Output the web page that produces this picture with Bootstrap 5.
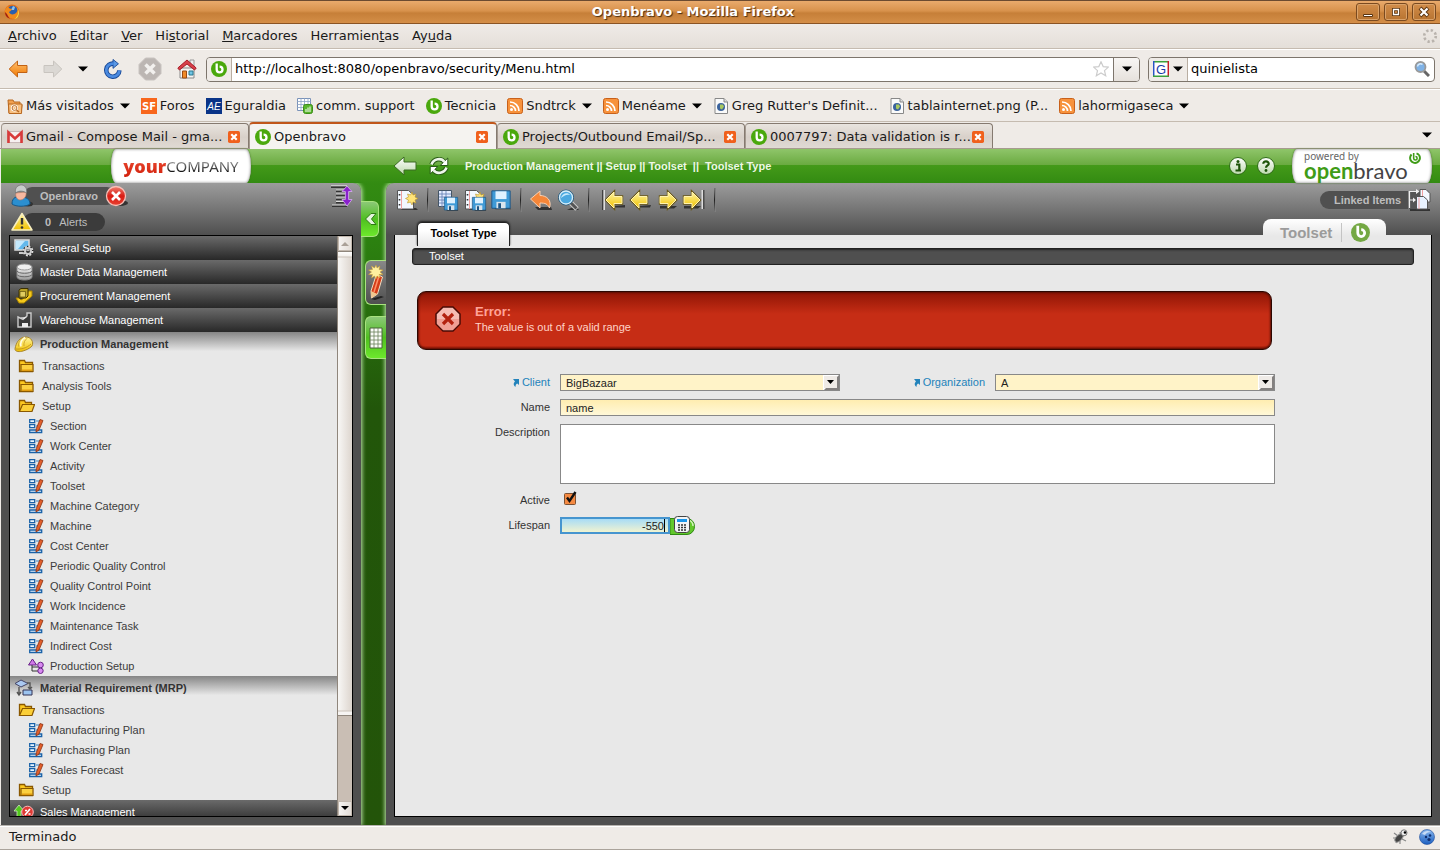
<!DOCTYPE html>
<html lang="es">
<head>
<meta charset="utf-8">
<meta name="viewport" content="width=device-width, initial-scale=1">
<title>Openbravo - Mozilla Firefox</title>
<link rel="stylesheet" href="https://cdn.jsdelivr.net/npm/bootstrap@5.3.0/dist/css/bootstrap.min.css">
<style>
  :root { --chrome: #efebe7; --line: #c5bbb0; }
  body { font: 13px/16px "DejaVu Sans", sans-serif; color: #1a1a1a; background: var(--chrome); overflow: hidden; }
  button { border: 0; background: none; padding: 0; color: inherit; font: inherit; white-space: nowrap; }
  a { color: inherit; text-decoration: none; }
  svg { display: block; flex: none; }
  .sprite { width: 0; height: 0; }
  .i10 { width: 10px; height: 6px; }
  .i12 { width: 12px; height: 12px; }
  .i16 { width: 16px; height: 16px; }
  .i20 { width: 20px; height: 20px; }
  .i24 { width: 24px; height: 24px; }

  /* window chrome */
  .title-bar { height: 24px; color: #fff; font-weight: bold; text-shadow: 1px 1px 1px #4a2c10; border-top: 1px solid #6b4a30; border-bottom: 1px solid #8a5424; background: linear-gradient(#e9aa6c, #d8924c 45%, #c67f38 55%, #d48e48); }
  .title-bar h1 { font-size: 13px; line-height: 16px; padding-right: 14px; }
  .win-btn { width: 24px; height: 18px; border: 1px solid #7a4a20; border-radius: 3px; box-shadow: inset 0 0 0 1px #dba36a; background: linear-gradient(#d28d4a, #b87431); }
  .menu-bar { height: 25px; gap: 13px; padding: 0 2px 0 8px; background: linear-gradient(#efebe7, #e4dfd9); border-bottom: 1px solid var(--line); }
  .nav-bar { height: 40px; border-top: 1px solid #fff; border-bottom: 1px solid var(--line); padding: 0 5px 0 8px; }
  .nav-keys { gap: 15px; padding-right: 9px; }
  .mark-bar { height: 33px; border-top: 1px solid #fff; border-bottom: 1px solid var(--line); gap: 11px; padding: 0 7px; }
  .mark-bar a, .mark-bar button { display: flex; align-items: center; gap: 3px; }
  .mark-bar .i10 { margin-left: 3px; }
  .url-box, .search-box { height: 25px; border: 1px solid #7d756c; border-radius: 4px; background: #fff; overflow: hidden; }
  .url-box input, .search-box input { border: 0; outline: 0; padding: 0 3px; min-width: 0; background: none; }
  .site-id { background: var(--chrome); border-right: 1px solid #b9aea2; }
  .url-drop { width: 26px; border-left: 1px solid #7d756c; background: linear-gradient(#f8f6f4, #e6e1dc); }
  .search-box { width: 287px; }
  .tab-bar { height: 27px; border-bottom: 1px solid #a79b90; padding-left: 1px; }
  .win-tab { flex: 0 1 248px; min-width: 0; height: 25px; gap: 3px; padding: 1px 8px 0 5px; border: 1px solid #857a70; border-bottom: 0; border-left-color: #a49a90; border-radius: 4px 4px 0 0; background: linear-gradient(#e9e4df, #d8d0c9 55%, #e0dad4); }
  .win-tab span { min-width: 0; flex: 1 1 0; text-align: left; }
  .win-tab.on { height: 27px; margin-bottom: -1px; border-top: 2px solid #c0561a; background: #f5f3f0; }
  .status-bar { height: 25px; border-top: 1px solid #b7b3ae; border-bottom: 1px solid #aaa39b; box-shadow: inset 0 1px #fff; padding: 0 5px 1px 9px; }

  /* application */
  .app { font: 11px/14px "Liberation Sans", Arial, sans-serif; border-left: 1px solid var(--chrome); background: linear-gradient(#8fc56a 0, #6aaa40 16px, #449a19 16px, #338b12 34px, #2c8110 90px, #22560a 260px, #235409); min-height: 0; }
  .app-head { height: 34px; color: #eef7e6; }
  .head-left { width: 360px; }
  .brand-tab { background: #fff; width: 140px; height: 34px; border-radius: 10px / 34px; box-shadow: inset 0 0 3px #777, 0 0 2px #3d6a22; }
  .brand-name { font: 18px/24px "Noto Sans", sans-serif; }
  .red-text { font-weight: 800; font-family: "Open Sans", sans-serif; background: linear-gradient(#f0563c, #d01c08); -webkit-background-clip: text; background-clip: text; color: transparent; }
  .gray-text { font-size: 15px; background: linear-gradient(#aaa 25%, #111 75%); -webkit-background-clip: text; background-clip: text; color: transparent; }
  .powered { font: 10px/11px "Noto Sans", sans-serif; color: #666; padding: 2px 12px 0; }
  .powered strong { font: 22px/17px Lato, sans-serif; color: #444; display: block; }
  .powered em { color: #3f9c17; font-style: normal; font-weight: bold; }
  .ob-small { right: 11px; top: 3px; }
  .panel { background: linear-gradient(#9c9c9c, #4f4f4f 52px, #4f4f4f); box-shadow: 0 0 4px 1px #c6e9b5; }
  .panel-left { width: 360px; border-radius: 0 8px 0 0; padding: 0 8px 8px; }
  .panel-main { border-radius: 8px 0 0 0; padding: 0 8px 8px; }
  .rail { width: 25px; padding-top: 18px; }
  .rail button { width: 21px; height: 43px; border: 1px solid #a9e37f; border-right: 0; border-radius: 6px 0 0 6px; background: linear-gradient(#8cc878, #4fbf20 50%, #6de82c); z-index: 1; }
  .rail .fold { width: 18px; height: 36px; border-right: 1px solid #a9e37f; border-left: 0; border-radius: 0 6px 6px 0; margin-bottom: 23px; }
  .rail .edit { height: 45px; margin-bottom: 11px; background: linear-gradient(#888, #4f4f4f); }
  .pill { height: 18px; border-radius: 9px; background: #505050; color: #bdbdbd; }
  .user-pill { padding: 0 18px 0 17px; margin-left: -10px; margin-right: -12px; }
  .alert-pill { padding: 0 18px 0 22px; margin-left: -10px; background: #3b3b3b; }
  .user-row { height: 26px; }
  .user-row > svg { position: relative; z-index: 1; }

  .menu-box { border: 1px solid #000; background: #e8e8e8; overflow: hidden; min-height: 0; }
  .menu-tree { min-height: 0; overflow: hidden; }
  .menu-tree ul { list-style: none; margin: 0; padding: 0; height: 0; }
  .menu-tree a { display: flex; align-items: center; color: #3c3c3c; height: 20px; }
  .menu-tree .top a { height: 24px; padding-left: 4px; gap: 6px; color: #fff; background: linear-gradient(#6a6a6a, #282828); }
  .menu-tree .open a { color: #333; font-weight: bold; background: linear-gradient(#858585, #e8e8e8 80%); }
  .menu-tree .lv1 a { padding-left: 8px; gap: 7px; }
  .menu-tree .lv2 a { padding-left: 18px; gap: 6px; }
  .scroller { width: 15px; background: #c9beb4; border-left: 1px solid #8f867c; }
  .scroller button { height: 15px; background: linear-gradient(90deg, #f6f4f2, #e3ddd7); border: 1px solid #c2b8ae; }
  .thumb { height: 465px; border: solid #8f867c; border-width: 1px 0; background: linear-gradient(#fff, #f3f0ed 4px, #cbc2b9 5px, transparent 6px, transparent 458px, #cbc2b9 459px, #f6f4f2 460px), linear-gradient(90deg, #f8f7f5, #ddd5ce); }

  .tools { height: 34px; padding-left: 1px; }
  .tool-sep { width: 1px; height: 24px; background: linear-gradient(#777, #222, #777); box-shadow: 1px 0 #7f7f7f; margin: 0 8px; }
  .tool-set { gap: 3px; }
  .tool-moves { margin-left: 4px; }
  .link-pill { padding: 0 0 0 14px; width: 88px; border-radius: 9px 0 0 9px; font-weight: bold; }
  .tab-row { height: 29px; margin-bottom: -11px; z-index: 1; }
  .tab-now { margin-left: 23px; height: 24px; width: 93px; border: 1px solid #222; border-bottom: 0; border-radius: 5px 5px 0 0; background: linear-gradient(#fff 30%, #e8e8e8); color: #000; font-weight: bold; padding-bottom: 4px; box-shadow: 0 -1px 2px #222; clip-path: inset(-3px -3px 0 -3px); }
  .tab-side { margin: 2px 46px 0 0; width: 123px; height: 27px; padding-left: 17px; gap: 9px; border-radius: 8px 8px 0 0; background: linear-gradient(#fff, #e8e8e8 17px); color: #9b9b9b; font: bold 15px/18px "Liberation Sans", sans-serif; }
  .tab-side svg { width: 29px; height: 19px; padding-left: 9px; border-left: 1px solid #c4c4c4; }
  .content-box { border: 1px solid #000; border-top: 0; background: #e8e8e8; }
  .crumb-bar { margin: 13px 17px 0; height: 17px; border-radius: 3px; border: 1px solid #222; background: #4f4f4f; box-shadow: inset 0 1px 2px #222; color: #fff; padding-left: 16px; line-height: 15px; }
  .error-box { margin: 26px 159px 0 22px; height: 59px; border: 1px solid #2c0802; border-radius: 9px; box-shadow: inset 0 0 2px 1px #5c1005; background: linear-gradient(#8f1505, #c62d15 22px, #c62d15 94%, #8f1505); color: #ffd3c8; padding: 0 17px 4px; gap: 14px; }
  .error-box strong { font-size: 13px; line-height: 16px; color: #ffa398; }
  .edit-form { display: grid; grid-template-columns: 143px 1fr 135px 1fr; column-gap: 10px; row-gap: 8px; margin: 24px 156px 0 12px; color: #333; }
  .edit-form .wide { grid-column: 2 / 5; }
  .edit-form > label { text-align: right; line-height: 17px; height: 17px; }
  .edit-form .ref { color: #2383bb; display: flex; justify-content: flex-end; align-items: center; gap: 3px; }
  .edit-form input[type=text], .edit-form select, .edit-form textarea { border: 1px solid #888; border-radius: 0; height: 17px; padding: 0 5px; width: 100%; outline: 0; color: #222; font: inherit; display: block; }
  .edit-form select { appearance: none; background: #fff3c8 url("data:image/svg+xml,%3Csvg xmlns='http://www.w3.org/2000/svg' width='16' height='15'%3E%3Cpath fill='%23fff' d='M0 0h16v15H0z'/%3E%3Cpath fill='%23848180' d='M16 0v15H1l2-2h11V2z'/%3E%3Cpath fill='%23efebe7' d='M1 1h13v12H1z'/%3E%3Cpath d='M4 5h7L7.500 9z'/%3E%3C/svg%3E") right center no-repeat; }
  .edit-form .req { background: linear-gradient(#ffedb0, #fff8d8); }
  .edit-form textarea { height: 60px; resize: none; background: #fff; }
  .edit-form input[type=checkbox] { appearance: none; margin: -2px 0 0 4px; width: 14px; height: 16px; display: block; background: url("data:image/svg+xml,%3Csvg xmlns='http://www.w3.org/2000/svg' width='14' height='16'%3E%3Crect x='.5' y='3.500' width='11' height='11' rx='1' fill='%23f58a42' stroke='%237c5033'/%3E%3Cpath d='M3 7.500L5.500 11 11.500 2' fill='none' stroke='%23111' stroke-width='2.400'/%3E%3C/svg%3E"); }
  .edit-form input.focused { width: 110px; padding-right: 4px; text-align: right; border: 2px solid #4695cf; background: linear-gradient(#000, #000) right 3px center / 1px 13px no-repeat, linear-gradient(#a8dcf6, #f1f3d0); }
  .life-row { height: 17px; }
  .status-icons { gap: 11px; }
</style>
</head>
<body class="vh-100 d-flex flex-column">

<svg class="sprite position-absolute" aria-hidden="true">
  <defs>
    <linearGradient id="gOr" x2="0" y2="1"><stop stop-color="#ffc070"/><stop offset="1" stop-color="#f07800"/></linearGradient>
    <linearGradient id="gYe" x2="0" y2="1"><stop stop-color="#fff6a0"/><stop offset="1" stop-color="#f0c000"/></linearGradient>
    <linearGradient id="gBl" x2="0" y2="1"><stop stop-color="#8ab8ee"/><stop offset="1" stop-color="#1c5fc0"/></linearGradient>
    <linearGradient id="gWh" x2="0" y2="1"><stop stop-color="#fff"/><stop offset="1" stop-color="#bcd8ac"/></linearGradient>
    <linearGradient id="gGr" x2="0" y2="1"><stop stop-color="#f4f4f4"/><stop offset="1" stop-color="#9a9a9a"/></linearGradient>
    <linearGradient id="gRd" x2="0" y2="1"><stop stop-color="#f08070"/><stop offset=".5" stop-color="#d81c14"/><stop offset="1" stop-color="#e84030"/></linearGradient>
  </defs>
  <symbol id="caret" viewBox="0 0 10 6"><path d="M0 .5h10L5 5.500z"/></symbol>
  <symbol id="firefox" viewBox="0 0 16 16"><circle cx="8" cy="8" r="7.500" fill="#e0701c"/><circle cx="8.500" cy="7" r="5.200" fill="#2a5fae"/><path d="M9 2l2 1-1 3-3 0z" fill="#8cc4ee"/><path d="M1 6c1-2 2-3 3-4 0 2 2 3 4 3-1 2-2 2-3 3 1 3 5 3 7 1 1-1 1-2 2-3 1 5-2 9-6 9S0 11 1 6z" fill="#f08a1c"/><path d="M12 3c3 3 3 9-2 12 5 0 7-8 2-12z" fill="#ffdc3c"/><path d="M1 8c0 5 4 7 8 7-3 0-5-2-6-5z" fill="#9c1f12"/></symbol>
  <symbol id="arrowL" viewBox="0 0 20 20"><path d="M1.200 10L9.500 2v4.500H19v7H9.500V18z" fill="url(#gOr)" stroke="#c26214"/></symbol>
  <symbol id="arrowR" viewBox="0 0 20 20"><path d="M18.800 10L10.500 2v4.500H1v7h9.500V18z" fill="#dbd8d4" stroke="#c8c4bf"/></symbol>
  <symbol id="reload" viewBox="0 0 20 22"><path d="M17 12.500a7.200 7.200 0 1 1-6-7.300" fill="none" stroke="#1a4a98" stroke-width="5"/><path d="M10 .5l6 4.800-6 5z" fill="#5b98e4" stroke="#1a4a98"/><path d="M17 12.500a7.200 7.200 0 1 1-6-7.300" fill="none" stroke="#4a8ae0" stroke-width="3"/></symbol>
  <symbol id="stop" viewBox="0 0 24 24"><path d="M7.500 1h9L23 7.500v9L16.500 23h-9L1 16.500v-9z" fill="#bcb6b3" stroke="#c8c3c0"/><path d="M7.500 7.500l9 9m0-9l-9 9" stroke="#f2f0ee" stroke-width="3.500"/></symbol>
  <symbol id="home" viewBox="0 0 20 20"><path d="M13 1h4v7h-4z" fill="#eee" stroke="#999"/><path d="M3 9h14v10H3z" fill="#f6f4f2" stroke="#888"/><path d="M10 1L.8 9l1.600 2L10 5l7.600 6 1.600-2z" fill="#d8404a" stroke="#a81c28"/><path d="M5.500 12h4v7h-4z" fill="#f08a28" stroke="#9a4a10"/><path d="M12 12h4v4h-4z" fill="#6fc4e4" stroke="#287890"/></symbol>
  <symbol id="ob" viewBox="0 0 16 16"><circle cx="8" cy="8" r="8" fill="currentColor"/><path d="M5.700 2.400v6.100a2.900 2.900 0 1 0 2.900-2.900" fill="none" stroke="#fff" stroke-width="2.300"/></symbol>
  <symbol id="obring" viewBox="0 0 18 18"><circle cx="9" cy="9" r="7.300" fill="none" stroke="currentColor" stroke-width="3" stroke-dasharray="37 9" transform="rotate(-72 9 9)"/><path d="M7 1.500v8a2.600 2.600 0 1 0 2.600-2.800" fill="none" stroke="currentColor" stroke-width="2.400"/></symbol>
  <symbol id="star" viewBox="0 0 16 16"><path d="M8 .8l2.200 4.800 5.200.5-3.900 3.500 1.200 5.100L8 12l-4.700 2.700 1.200-5.100L.6 6.100l5.200-.5z" fill="#fff" stroke="#ccc" stroke-width="1.200"/></symbol>
  <symbol id="lens" viewBox="0 0 16 16"><path d="M10 10l5 5" stroke="#666" stroke-width="3"/><circle cx="6.500" cy="6" r="5" fill="#7fb2e6" stroke="#999" stroke-width="1.800"/><path d="M3.500 5.500a3 3 0 0 1 5-2" stroke="#d8ecfc" fill="none" stroke-width="1.500"/></symbol>
  <symbol id="goog" viewBox="0 0 16 16"><path d="M0 0h16v16H0z" fill="#fff"/><path d="M0 .7h16" stroke="#3aa13a" stroke-width="1.500"/><path d="M.7 0v16" stroke="#2a54c8" stroke-width="1.500"/><path d="M15.300 0v16" stroke="#c8202a" stroke-width="1.500"/><path d="M0 15.300h16" stroke="#3aa13a" stroke-width="1.500"/><text x="8" y="12.500" text-anchor="middle" font-family="Liberation Sans" font-size="13" fill="#1a3ca8">G</text></symbol>
  <symbol id="fold" viewBox="0 0 16 16"><path d="M1 2h5l1 2h6v3h2l-1 8H2z" fill="#f0a050" stroke="#b86820"/><path d="M1.500 6H15l-.5 9.500H2z" fill="#f8c080" stroke="#b86820"/><circle cx="7.500" cy="10" r="2.400" fill="none" stroke="#fff" stroke-width="2.400"/><circle cx="7.500" cy="10" r="2.400" fill="none" stroke="#b86820"/><path d="M9.500 12l2.500 2" stroke="#b86820" stroke-width="1.600"/></symbol>
  <symbol id="sf" viewBox="0 0 16 16"><path d="M0 0h16v16H0z" fill="#f8661c"/><text x="8" y="12" text-anchor="middle" font-family="DejaVu Sans" font-weight="bold" font-size="10" fill="#fff">SF</text></symbol>
  <symbol id="ae" viewBox="0 0 16 16"><path d="M0 0h16v16H0z" fill="#0a3488"/><text x="8" y="12" text-anchor="middle" font-family="Liberation Sans" font-style="italic" font-size="10" fill="#fff">AE</text></symbol>
  <symbol id="comm" viewBox="0 0 16 16"><path d="M.5.5h13v12H.5z" fill="#fff" stroke="#7a92b8"/><path d="M4 0v13M7.500 0v13M11 0v13M0 3.500h14M0 6.500h14M0 9.500h14" stroke="#8aa2c4" stroke-width=".8"/><rect x="6.500" y="6.500" width="9" height="9" rx="2" fill="#58b52c" stroke="#3c8c18"/><path d="M9 14v-3m2 3V9.500m2 4.500V8.500" stroke="#fff"/></symbol>
  <symbol id="rss" viewBox="0 0 16 16"><rect x=".5" y=".5" width="15" height="15" rx="2" fill="#f7923c" stroke="#c8601a"/><circle cx="4.500" cy="11.500" r="1.500" fill="#fff"/><path d="M3 7.500A5.500 5.500 0 0 1 8.500 13M3 4a9 9 0 0 1 9 9" fill="none" stroke="#fff" stroke-width="1.700"/></symbol>
  <symbol id="pagei" viewBox="0 0 16 16"><path d="M2 .5h9L14.500 4v11.500H2z" fill="#fafafa" stroke="#888"/><path d="M11 .5V4h3.500" fill="#ddd" stroke="#888"/><circle cx="8" cy="9" r="4" fill="#3a629c"/><path d="M7 6.500l3 0 1 2-2 3-2-1z" fill="#a8c860"/></symbol>
  <symbol id="gmail" viewBox="0 0 16 16"><path d="M.5 2.500h15v11H.5z" fill="#f6f0f0" stroke="#c8b8b8"/><path d="M1.500 14V3.500L8 9.500l6.500-6V14" fill="none" stroke="#d83a3a" stroke-width="2.600"/></symbol>
  <symbol id="shut" viewBox="0 0 11 11"><rect width="11" height="11" rx="1.500" fill="#f0601c"/><path d="M3 3l5 5m0-5L3 8" stroke="#fff" stroke-width="2"/></symbol>
  <symbol id="throb" viewBox="0 0 16 16"><circle cx="8" cy="8" r="5.800" fill="none" stroke="#b9b3ad" stroke-width="2.600" stroke-dasharray="2.300 2.255"/></symbol>
  <symbol id="hArrow" viewBox="0 0 24 20"><path d="M1 10L11 1v5h12v8H11v5z" fill="url(#gWh)" stroke="#3a6a22"/></symbol>
  <symbol id="hRel" viewBox="0 0 20 20"><path d="M2.500 8.500c2-6 10-7 13-2.500M17.500 11.500c-2 6-10 7-13 2.500" fill="none" stroke="#285a14" stroke-width="4.500"/><path d="M18.800 2v7.500h-7.600zM1.200 18v-7.500h7.600z" fill="#fff" stroke="#285a14"/><path d="M2.500 8.500c2-6 10-7 13-2.500M17.500 11.500c-2 6-10 7-13 2.500" fill="none" stroke="#eef6ea" stroke-width="2.600"/></symbol>
  <symbol id="hInfo" viewBox="0 0 20 20"><circle cx="10" cy="10" r="8.500" fill="url(#gWh)" stroke="#2c6a14"/><path d="M8 8.500h3.300V14M7.500 14.500h5.500" stroke="#1d5408" stroke-width="2.200" fill="none"/><circle cx="10" cy="5.500" r="1.500" fill="#1d5408"/></symbol>
  <symbol id="hHelp" viewBox="0 0 20 20"><circle cx="10" cy="10" r="8.500" fill="url(#gWh)" stroke="#2c6a14"/><path d="M7.300 7.800c0-3.400 5.600-3 5.400 0-.2 1.700-2.600 1.700-2.700 4" stroke="#1d5408" stroke-width="2.200" fill="none"/><circle cx="10" cy="14.500" r="1.400" fill="#1d5408"/></symbol>
  <symbol id="user" viewBox="0 0 24 24"><ellipse cx="19" cy="20" rx="5" ry="2.500" fill="#333"/><path d="M3 20c0-7 5-8 9-7 5 0 9 2 9 7-4 3-14 3-18 0z" fill="#2b8fd0" stroke="#175888"/><path d="M7 9c-1 3 1 7 4 7s7-3 6-8z" fill="#f8b8a0" stroke="#b87860" stroke-width=".6"/><path d="M6.500 9c-1-6 3-8 6-8s6 3 5 8c-3-2-7-3-11 0z" fill="#c9cccc" stroke="#666" stroke-width=".6"/></symbol>
  <symbol id="quit" viewBox="0 0 24 24"><ellipse cx="16" cy="19" rx="8" ry="3" fill="#333"/><circle cx="12" cy="12" r="9.500" fill="url(#gRd)" stroke="#f6c0b8" stroke-width="1.300"/><path d="M8 8l8 8m0-8l-8 8" stroke="#fff" stroke-width="2.600"/></symbol>
  <symbol id="warn" viewBox="0 0 24 20"><path d="M13 1.500L3 18h20z" fill="url(#gYe)" stroke="#f8efc0" stroke-width="1.500" stroke-linejoin="round"/><path d="M13 6v6.500" stroke="#333" stroke-width="2.400"/><circle cx="13" cy="15.500" r="1.300" fill="#333"/></symbol>
  <symbol id="expand" viewBox="0 0 22 22"><path d="M0 2h16M5 6h10M5 10h10M5 14h10M5 17.500h10M1 21h15" stroke="#333" stroke-width="2"/><path d="M0 .8h16M5 5h9M5 9h9M5 13h9M5 16.500h9M1 20h15" stroke="#ddd"/><path d="M16 1l5 5.500h-3.400v8H21L16 21l-5-6.500h3.400v-8H11z" fill="#8a20cc" stroke="#d8b0f0" stroke-width=".8"/></symbol>
  <symbol id="mSetup" viewBox="0 0 20 18"><path d="M1 1h14v10H1z" fill="#62b8ec" stroke="#ddd" stroke-width="1.500"/><path d="M2 2h9L4 10H2z" fill="#c4e8fc"/><path d="M5 14h7" stroke="#ccc" stroke-width="2"/><circle cx="14" cy="12" r="3.600" fill="none" stroke="#222" stroke-width="3.500"/><circle cx="14" cy="12" r="4.500" fill="none" stroke="#ddd" stroke-width="1.800" stroke-dasharray="2 1.500"/><circle cx="14" cy="12" r="3" fill="none" stroke="#ccc" stroke-width="2"/></symbol>
  <symbol id="mData" viewBox="0 0 20 18"><path d="M3 4v10c0 4 15 4 15 0V4" fill="url(#gGr)" stroke="#888"/><ellipse cx="10.500" cy="4" rx="7.500" ry="3" fill="#eee" stroke="#999"/><path d="M3 8c1 3 14 3 15 0M3 11.500c1 3 14 3 15 0" fill="none" stroke="#666"/></symbol>
  <symbol id="mProc" viewBox="0 0 20 18"><path d="M14 4h4v5l-8 7H5l-3-5h3l2 2 6-4z" fill="#f4c81c" stroke="#a88200"/><path d="M5 3l2-1.500h7V9l-2 2H5z" fill="#b8a028" stroke="#3c3000"/><path d="M6 4.500h5.500V10H6z" fill="#e0cc60" stroke="#4c3c00" stroke-width=".6"/></symbol>
  <symbol id="mWare" viewBox="0 0 20 18"><path d="M4 16V6l5 2.500L13 5V2h4v14z" fill="#3a3a3a" stroke="#ccc" stroke-width="1.400"/><path d="M6 6.500l4 1.500 3-2M8 12h6v4H8z" fill="#eee"/></symbol>
  <symbol id="mProd" viewBox="0 0 20 18"><path d="M1 14C2 7 6 2 12 2c5 0 8 5 6 9-3 3-6 4-9 5-3 1-8 1-8-2z" fill="url(#gYe)" stroke="#a8862c"/><path d="M11 2.500c-3 1-5 5-4 9" fill="none" stroke="#fffbe0" stroke-width="1.600"/><path d="M9 2.500c-3 2-5 5-4.500 9M13.500 3c-3 2-4 5-3.500 8" fill="none" stroke="#c89a20" stroke-width=".8"/><path d="M2 14c5 .5 11-1 15-5" fill="none" stroke="#c89a20"/></symbol>
  <symbol id="mMrp" viewBox="0 0 20 18"><path d="M7 1l7 3.500L7 8 1 4.500z" fill="#aac8f0" stroke="#446"/><path d="M9 11h9v5H9z" fill="#9cc4f0" stroke="#335"/><path d="M5 8v7M3 13l2 3 2-3M13 4h3v5M14 8l2 2 2-2" fill="none" stroke="#555" stroke-width="1.400"/></symbol>
  <symbol id="mSale" viewBox="0 0 20 18"><path d="M5 2l5 6H7v8H3V8H0z" fill="#52c81c" stroke="#cfeec0" stroke-width=".8"/><circle cx="13.500" cy="9" r="5.800" fill="#e03a34" stroke="#fbb"/><path d="M11 12l5-6M11 7.500h2M14.500 11h2" stroke="#fff" stroke-width="1.700"/></symbol>
  <symbol id="dirC" viewBox="0 0 17 14"><path d="M1.500 12.500v-11h5l1 2h7v9z" fill="#fcc820" stroke="#8a5800" stroke-width="1.300"/><path d="M3 12.500v-7h12v7z" fill="#fbd040" stroke="#8a5800" stroke-width="1.200"/><path d="M4 10.500h10v1.500H4z" fill="#e09c10"/></symbol>
  <symbol id="dirO" viewBox="0 0 17 14"><path d="M1.500 12.500v-11h5l1 2h6v3" fill="#fcc820" stroke="#8a5800" stroke-width="1.300"/><path d="M1.500 12.500l3-7h12l-2.500 7z" fill="#fbcf38" stroke="#8a5800" stroke-width="1.200"/></symbol>
  <symbol id="win" viewBox="0 0 16 16"><path d="M1.700 1.700h5v3h-5zM1.700 6.700h5v3h-5zM1.700 12h12v2.500h-12z" fill="#eaf6ff" stroke="#1a62a8" stroke-width="1.300"/><path d="M8 3h4M8 8h3" stroke="#3a82c0"/><path d="M12 1.500l3 1-4 9.500-3 2 .3-3.500z" fill="#e2602c" stroke="#8a3010" stroke-width=".8"/></symbol>
  <symbol id="flow" viewBox="0 0 16 16"><path d="M4.500 1l4 6h-8z" fill="#d07ae8" stroke="#682088"/><path d="M4 7v6h6M4 9h7" fill="none" stroke="#333"/><circle cx="12.500" cy="7" r="2.800" fill="#d88af0" stroke="#682088"/><circle cx="12.500" cy="12.800" r="2.700" fill="#d88af0" stroke="#682088"/></symbol>
  <symbol id="tNew" viewBox="0 0 24 24"><path d="M5 20h16l2 2H7z" fill="#333"/><path d="M2.500 2.500h11l5 4.500v14h-16z" fill="#f2f8ff" stroke="#555"/><path d="M6.500 3v18" stroke="#f0a0a0"/><path d="M4.500 6v1.500M4.500 11v1.500M4.500 16v1.500" stroke="#333" stroke-width="1.600"/><path d="M17 4l1 3 3-1-1 3 3 1.500-3 1.500 1 3-3-1-1 3-1.500-3-3 1 1-3-3-1.500 3-1.500-1-3 3 1z" fill="#ffe478" stroke="#b8942c" stroke-width=".6"/></symbol>
  <symbol id="disk" viewBox="0 0 24 24"><path d="M4 20h17l2 2H6z" fill="#333"/><path d="M2 2h20v19H2z" fill="#3f9ad6" stroke="#1b5484"/><path d="M6 2.500h12V11H6z" fill="#dff2ff"/><path d="M7 14h10v7H7z" fill="#d8e4ec"/><path d="M9 15.500h3V21H9z" fill="#1b5484"/></symbol>
  <symbol id="tGrid" viewBox="0 0 24 24"><path d="M2.500 2.500h13v16h-13z" fill="#e6eeff" stroke="#456"/><path d="M6 3v16M10 3v16M3 6h12M3 9h12M3 12h12M3 15h12" stroke="#6a84b8" stroke-width=".9"/><use href="#disk" x="7" y="8" width="16" height="16"/></symbol>
  <symbol id="tNewSave" viewBox="0 0 24 24"><use href="#tNew" width="24" height="24"/><use href="#disk" x="8" y="8" width="16" height="16"/></symbol>
  <symbol id="undo" viewBox="0 0 24 24"><path d="M6 19h16l1 3H9z" fill="#333"/><path d="M1.500 11L11 3v4.500c7 0 12 5 9.500 12.500-2-4-4-5-9.500-5v5z" fill="#f58638" stroke="#fbd0b0"/></symbol>
  <symbol id="find" viewBox="0 0 24 24"><path d="M11 22h12l-4-4z" fill="#333"/><path d="M14.500 14.500l6.500 6.500" stroke="#ccc" stroke-width="5"/><path d="M14.500 14.500l6 6" stroke="#555" stroke-width="3"/><circle cx="10" cy="9.500" r="7.500" fill="#4aa8e0" stroke="#2a5878" stroke-width="1"/><circle cx="10" cy="9.500" r="6.500" fill="#4aa8e0" stroke="#d8eef8" stroke-width="1.300"/><path d="M5 10c1-5 7-6 9-3-4-1-6 1-9 3z" fill="#c8eafa"/></symbol>
  <symbol id="prev" viewBox="0 0 24 24"><path d="M8 19.500h14l1-2.500-12 1z" fill="#333"/><path d="M3 12l8-8v4.500h8v7h-8V20z" fill="url(#gYe)" stroke="#6a5818" stroke-width="2.400"/><path d="M3 12l8-8v4.500h8v7h-8V20z" fill="url(#gYe)" stroke="#fff3b0"/></symbol>
  <symbol id="next" viewBox="0 0 24 24"><path d="M5 20.500h14l3-2.500H5z" fill="#333"/><path d="M21 12l-8-8v4.500H5v7h8V20z" fill="url(#gYe)" stroke="#6a5818" stroke-width="2.400"/><path d="M21 12l-8-8v4.500H5v7h8V20z" fill="url(#gYe)" stroke="#fff3b0"/></symbol>
  <symbol id="first" viewBox="0 0 24 24"><use href="#prev" x="2" width="24" height="24"/><path d="M3 2v20" stroke="#ddd" stroke-width="2"/><path d="M1.800 2v20" stroke="#222"/></symbol>
  <symbol id="last" viewBox="0 0 24 24"><use href="#next" x="-3" width="24" height="24"/><path d="M20.500 2v19" stroke="#ddd" stroke-width="2"/><path d="M21.800 2v19" stroke="#222"/></symbol>
  <symbol id="linked" viewBox="0 0 24 24"><path d="M1 3h11v18H1z" fill="#555"/><path d="M2 21h20v2H2z" fill="#333"/><path d="M12 1.500h6l4 4V14H12z" fill="#f6f9ff" stroke="#555"/><path d="M8.500 8.500h7l4 3.500v9h-11z" fill="#e8f2ff" stroke="#555"/><path d="M14.500 2v6M11 9.500V21" stroke="#f0a0a0"/><path d="M1.500 20V3.500H9M1.500 12H6" stroke="#eee" stroke-width="1.200" fill="none"/><path d="M8 1l3.500 2.500L8 6zM5 9.500L8 12l-3 2.500z" fill="#eee"/></symbol>
  <symbol id="pencil" viewBox="0 0 18 40"><path d="M4 36l10-3 3 1-9 3z" fill="#222"/><path d="M9.500 11l6 3-5 17-6 4-.5-7z" fill="#d43c18" stroke="#f2ddc0"/><path d="M4 28l6.500 3-6 4z" fill="#f0c890"/><path d="M12 13l-5 16" stroke="#ff9068" stroke-width="1.600"/><path d="M9 2l1 3 3-2-1 3.500 4 .5-3 2 3 2.500-4 0 1 3.500-3-2-1 3-1.500-3-3 2 1-3.500-4 0 3-2.500-3-2 4-.5-1-3.500 3 2z" fill="#fff0a0" stroke="#c89828" stroke-width=".5"/></symbol>
  <symbol id="sheet" viewBox="0 0 14 22"><path d="M1 1h12v20H1z" fill="#fbfcf8" stroke="#486038"/><path d="M5 1v20M9 1v20M1 5h12M1 9h12M1 13h12M1 17h12" stroke="#6a8058" stroke-width=".8"/></symbol>
  <symbol id="octo" viewBox="0 0 26 26"><path d="M8 1h10l7 7v10l-7 7H8l-7-7V8z" fill="#f6bcb4" stroke="#4a0a04" stroke-width="1.500"/><path d="M2 13h22v5l-6 6H8l-6-6z" fill="#ec8c80" opacity=".6"/><path d="M8 8l10 10m0-10L8 18" stroke="#b3210f" stroke-width="3.200"/></symbol>
  <symbol id="ref" viewBox="0 0 7 8"><path d="M1 0h6v6L5.300 4.500C4 5 3.500 6 3.500 8 1 6 1.500 4 3 2.500z" fill="#2383bb"/></symbol>
  <symbol id="calc" viewBox="0 0 26 20"><path d="M0 2.500h17a7.500 8 0 0 1 0 16H0z" fill="#62c82c" stroke="#2f8a12"/><path d="M18 4a6 6 0 0 1 5 6" stroke="#d0f4b8" fill="none" stroke-width="1.500"/><rect x="4.500" y=".5" width="15" height="16" rx="3" fill="#f2f4f6" stroke="#444"/><path d="M7 3h10v3H7z" fill="#1a96ea"/><path d="M8 9h9M8 11.500h9M8 14h9" stroke="#333" stroke-width="1.300" stroke-dasharray="2 1"/></symbol>
  <symbol id="bug" viewBox="0 0 16 16"><path d="M2 4l4 3M1 9l4 0M4 14l2-4M8 15l0-4M14 12l-4-2M8 3l1 4" stroke="#888" stroke-width="1.200"/><ellipse cx="7" cy="9" rx="5" ry="2.800" transform="rotate(-45 7 9)" fill="#444" stroke="#999"/><circle cx="12" cy="3.800" r="3" fill="#eee" stroke="#777"/><circle cx="13" cy="3.500" r="1.300"/></symbol>
  <symbol id="orb" viewBox="0 0 16 16"><circle cx="8" cy="8" r="7.500" fill="url(#gBl)" stroke="#1c4a98" stroke-width=".6"/><path d="M3 5c2-3 6-4 9-2-3 0-5 1-6 3z" fill="#c8dcf6"/><circle cx="7" cy="8" r="1.200" fill="#123070"/><circle cx="11" cy="6.500" r="1.300" fill="#123070"/><circle cx="10" cy="10.500" r="1.600" fill="#123070"/></symbol>
</svg>

<header class="title-bar d-flex align-items-center px-1 flex-shrink-0">
  <svg class="i16"><use href="#firefox"/></svg>
  <h1 class="flex-grow-1 text-center m-0 ps-4 fw-bold">Openbravo - Mozilla Firefox</h1>
  <div class="d-flex gap-1 me-n1">
    <button class="win-btn" aria-label="Minimizar"><svg width="22" height="16"><path d="M6.500 10.500h9v2h-9z" fill="#fff" stroke="#5a3410"/></svg></button>
    <button class="win-btn" aria-label="Maximizar"><svg width="22" height="16"><path d="M8.500 5.500h5v5h-5z" fill="none" stroke="#5a3410" stroke-width="3"/><path d="M8.500 5.500h5v5h-5z" fill="none" stroke="#fff" stroke-width="1.300"/></svg></button>
    <button class="win-btn" aria-label="Cerrar"><svg width="22" height="16"><path d="M7 4l8 8m0-8l-8 8" stroke="#5a3410" stroke-width="4"/><path d="M7.500 4.500l7 7m0-7l-7 7" stroke="#fff" stroke-width="2.200"/></svg></button>
  </div>
</header>

<nav class="menu-bar d-flex align-items-center flex-shrink-0">
  <button><u>A</u>rchivo</button><button><u>E</u>ditar</button><button><u>V</u>er</button><button>Hi<u>s</u>torial</button><button><u>M</u>arcadores</button><button>Herramien<u>t</u>as</button><button>Ay<u>u</u>da</button>
  <svg class="i16 ms-auto"><use href="#throb"/></svg>
</nav>

<div class="nav-bar d-flex align-items-center flex-shrink-0">
  <div class="nav-keys d-flex align-items-center">
    <button aria-label="Atrás"><svg class="i20"><use href="#arrowL"/></svg></button>
    <button aria-label="Adelante"><svg class="i20"><use href="#arrowR"/></svg></button>
    <button aria-label="Recientes"><svg class="i10"><use href="#caret"/></svg></button>
    <button aria-label="Recargar"><svg class="i20"><use href="#reload"/></svg></button>
    <button aria-label="Detener"><svg class="i24"><use href="#stop"/></svg></button>
    <button aria-label="Inicio"><svg class="i20"><use href="#home"/></svg></button>
  </div>
  <div class="url-box d-flex flex-grow-1 align-items-stretch">
    <span class="site-id d-flex align-items-center px-1"><svg class="i16" color="#4aa80c"><use href="#ob"/></svg></span>
    <input class="flex-grow-1" type="text" aria-label="Dirección" value="http://localhost:8080/openbravo/security/Menu.html">
    <button class="px-1" aria-label="Marcar página"><svg class="i16"><use href="#star"/></svg></button>
    <button class="url-drop d-flex align-items-center justify-content-center" aria-label="Historial"><svg class="i10"><use href="#caret"/></svg></button>
  </div>
  <div class="search-box d-flex align-items-stretch ms-2">
    <button class="site-id d-flex align-items-center gap-1 px-1" aria-label="Buscador"><svg class="i16"><use href="#goog"/></svg><svg class="i10"><use href="#caret"/></svg></button>
    <input class="flex-grow-1" type="text" aria-label="Buscar" value="quinielista">
    <button class="pe-1" aria-label="Buscar"><svg class="i16"><use href="#lens"/></svg></button>
  </div>
</div>

<div class="mark-bar d-flex align-items-center flex-shrink-0">
  <button><svg class="i16"><use href="#fold"/></svg>Más visitados<svg class="i10"><use href="#caret"/></svg></button>
  <a href="#"><svg class="i16"><use href="#sf"/></svg>Foros</a>
  <a href="#"><svg class="i16"><use href="#ae"/></svg>Eguraldia</a>
  <a href="#"><svg class="i16"><use href="#comm"/></svg>comm. support</a>
  <a href="#"><svg class="i16" color="#4aa80c"><use href="#ob"/></svg>Tecnicia</a>
  <button><svg class="i16"><use href="#rss"/></svg>Sndtrck<svg class="i10"><use href="#caret"/></svg></button>
  <button><svg class="i16"><use href="#rss"/></svg>Menéame<svg class="i10"><use href="#caret"/></svg></button>
  <a href="#"><svg class="i16"><use href="#pagei"/></svg>Greg Rutter's Definit...</a>
  <a href="#"><svg class="i16"><use href="#pagei"/></svg>tablainternet.png (P...</a>
  <button><svg class="i16"><use href="#rss"/></svg>lahormigaseca<svg class="i10"><use href="#caret"/></svg></button>
</div>

<div class="tab-bar d-flex align-items-end flex-shrink-0">
  <button class="win-tab d-flex align-items-center"><svg class="i16"><use href="#gmail"/></svg><span>Gmail - Compose Mail - gma...</span><svg class="i12"><use href="#shut"/></svg></button>
  <button class="win-tab on d-flex align-items-center"><svg class="i16" color="#4aa80c"><use href="#ob"/></svg><span>Openbravo</span><svg class="i12"><use href="#shut"/></svg></button>
  <button class="win-tab d-flex align-items-center"><svg class="i16" color="#4aa80c"><use href="#ob"/></svg><span>Projects/Outbound Email/Sp...</span><svg class="i12"><use href="#shut"/></svg></button>
  <button class="win-tab d-flex align-items-center"><svg class="i16" color="#4aa80c"><use href="#ob"/></svg><span>0007797: Data validation is r...</span><svg class="i12"><use href="#shut"/></svg></button>
  <button class="ms-auto me-2 align-self-center" aria-label="Listar pestañas"><svg class="i10"><use href="#caret"/></svg></button>
</div>

<main class="app d-flex flex-column flex-grow-1">
  <div class="app-head d-flex align-items-center flex-shrink-0">
    <div class="head-left d-flex justify-content-center flex-shrink-0">
      <div class="brand-tab brand-name d-flex align-items-center justify-content-center"><span class="red-text">your</span><span class="gray-text">COMPANY</span></div>
    </div>
    <button class="ms-4 ps-2 me-2 pe-1" aria-label="Volver"><svg width="24" height="20"><use href="#hArrow"/></svg></button>
    <button class="me-3" aria-label="Actualizar"><svg class="i20"><use href="#hRel"/></svg></button>
    <strong class="text-nowrap">Production Management || Setup || Toolset &nbsp;|| &nbsp;Toolset Type</strong>
    <button class="ms-auto me-2" aria-label="Información"><svg class="i20"><use href="#hInfo"/></svg></button>
    <button class="me-3" aria-label="Ayuda"><svg class="i20"><use href="#hHelp"/></svg></button>
    <div class="brand-tab powered position-relative me-2"><div>powered by</div><strong><em>open</em>bravo</strong><svg class="i12 ob-small position-absolute" color="#3f9c17"><use href="#obring"/></svg></div>
  </div>

  <div class="d-flex flex-grow-1 align-items-stretch overflow-hidden">
    <aside class="panel panel-left d-flex flex-column flex-shrink-0">
      <div class="user-row d-flex align-items-center">
        <svg class="i24"><use href="#user"/></svg>
        <strong class="pill user-pill d-flex align-items-center">Openbravo</strong>
        <button aria-label="Salir"><svg class="i24"><use href="#quit"/></svg></button>
        <button class="ms-auto" aria-label="Expandir menú"><svg width="22" height="22"><use href="#expand"/></svg></button>
      </div>
      <div class="user-row d-flex align-items-center">
        <svg width="24" height="20"><use href="#warn"/></svg>
        <a class="pill alert-pill d-flex align-items-center" href="#"><b>0</b><span class="ps-2">Alerts</span></a>
      </div>
      <div class="menu-box d-flex flex-grow-1">
        <nav class="menu-tree flex-grow-1">
          <ul>
            <li class="top"><a href="#"><svg width="20" height="18"><use href="#mSetup"/></svg>General Setup</a></li>
            <li class="top"><a href="#"><svg width="20" height="18"><use href="#mData"/></svg>Master Data Management</a></li>
            <li class="top"><a href="#"><svg width="20" height="18"><use href="#mProc"/></svg>Procurement Management</a></li>
            <li class="top"><a href="#"><svg width="20" height="18"><use href="#mWare"/></svg>Warehouse Management</a></li>
            <li class="top open"><a href="#"><svg width="20" height="18"><use href="#mProd"/></svg>Production Management</a></li>
            <li class="lv1"><a href="#"><svg width="17" height="14"><use href="#dirC"/></svg>Transactions</a></li>
            <li class="lv1"><a href="#"><svg width="17" height="14"><use href="#dirC"/></svg>Analysis Tools</a></li>
            <li class="lv1"><a href="#"><svg width="17" height="14"><use href="#dirO"/></svg>Setup</a></li>
            <li class="lv2"><a href="#"><svg class="i16"><use href="#win"/></svg>Section</a></li>
            <li class="lv2"><a href="#"><svg class="i16"><use href="#win"/></svg>Work Center</a></li>
            <li class="lv2"><a href="#"><svg class="i16"><use href="#win"/></svg>Activity</a></li>
            <li class="lv2"><a href="#"><svg class="i16"><use href="#win"/></svg>Toolset</a></li>
            <li class="lv2"><a href="#"><svg class="i16"><use href="#win"/></svg>Machine Category</a></li>
            <li class="lv2"><a href="#"><svg class="i16"><use href="#win"/></svg>Machine</a></li>
            <li class="lv2"><a href="#"><svg class="i16"><use href="#win"/></svg>Cost Center</a></li>
            <li class="lv2"><a href="#"><svg class="i16"><use href="#win"/></svg>Periodic Quality Control</a></li>
            <li class="lv2"><a href="#"><svg class="i16"><use href="#win"/></svg>Quality Control Point</a></li>
            <li class="lv2"><a href="#"><svg class="i16"><use href="#win"/></svg>Work Incidence</a></li>
            <li class="lv2"><a href="#"><svg class="i16"><use href="#win"/></svg>Maintenance Task</a></li>
            <li class="lv2"><a href="#"><svg class="i16"><use href="#win"/></svg>Indirect Cost</a></li>
            <li class="lv2"><a href="#"><svg class="i16"><use href="#flow"/></svg>Production Setup</a></li>
            <li class="top open"><a href="#"><svg width="20" height="18"><use href="#mMrp"/></svg>Material Requirement (MRP)</a></li>
            <li class="lv1"><a href="#"><svg width="17" height="14"><use href="#dirO"/></svg>Transactions</a></li>
            <li class="lv2"><a href="#"><svg class="i16"><use href="#win"/></svg>Manufacturing Plan</a></li>
            <li class="lv2"><a href="#"><svg class="i16"><use href="#win"/></svg>Purchasing Plan</a></li>
            <li class="lv2"><a href="#"><svg class="i16"><use href="#win"/></svg>Sales Forecast</a></li>
            <li class="lv1"><a href="#"><svg width="17" height="14"><use href="#dirC"/></svg>Setup</a></li>
            <li class="top"><a href="#"><svg width="20" height="18"><use href="#mSale"/></svg>Sales Management</a></li>
          </ul>
        </nav>
        <div class="scroller d-flex flex-column">
          <button class="d-flex align-items-center justify-content-center" aria-label="Subir"><svg width="8" height="5"><path d="M0 5h8L4 1z" fill="#aaa198"/></svg></button>
          <div class="thumb"></div>
          <button class="d-flex align-items-center justify-content-center mt-auto" aria-label="Bajar"><svg width="8" height="5"><path d="M0 0h8L4 4z"/></svg></button>
        </div>
      </div>
    </aside>

    <div class="rail d-flex flex-column flex-shrink-0">
      <button class="fold align-self-start d-flex align-items-center justify-content-center" aria-label="Ocultar menú"><svg width="14" height="16"><path d="M13 2.500L8.500 8l4.500 5.500H8L2.500 8 8 2.500z" fill="#e4f4dc" stroke="#2c7a12"/></svg></button>
      <button class="edit align-self-end" aria-label="Edición"><svg width="20" height="40"><use href="#pencil"/></svg></button>
      <button class="align-self-end d-flex align-items-center justify-content-center" aria-label="Rejilla"><svg width="14" height="22"><use href="#sheet"/></svg></button>
    </div>

    <section class="panel panel-main d-flex flex-column flex-grow-1">
      <div class="tools d-flex align-items-center flex-shrink-0">
        <button aria-label="Nuevo"><svg class="i24"><use href="#tNew"/></svg></button>
        <span class="tool-sep"></span>
        <div class="tool-set d-flex" role="group">
          <button aria-label="Guardar en rejilla"><svg class="i24"><use href="#tGrid"/></svg></button>
          <button aria-label="Guardar y nuevo"><svg class="i24"><use href="#tNewSave"/></svg></button>
          <button aria-label="Guardar"><svg width="22" height="24"><use href="#disk"/></svg></button>
        </div>
        <span class="tool-sep"></span>
        <div class="tool-set d-flex" role="group">
          <button aria-label="Deshacer"><svg class="i24"><use href="#undo"/></svg></button>
          <button aria-label="Buscar"><svg class="i24"><use href="#find"/></svg></button>
        </div>
        <span class="tool-sep"></span>
        <div class="tool-set tool-moves d-flex" role="group">
          <button aria-label="Primero"><svg class="i24"><use href="#first"/></svg></button>
          <button aria-label="Anterior"><svg class="i24"><use href="#prev"/></svg></button>
          <button aria-label="Siguiente"><svg class="i24"><use href="#next"/></svg></button>
          <button aria-label="Último"><svg class="i24"><use href="#last"/></svg></button>
        </div>
        <span class="tool-sep"></span>
        <button class="ms-auto d-flex align-items-center"><span class="pill link-pill d-flex align-items-center">Linked Items</span><svg class="i24"><use href="#linked"/></svg></button>
      </div>
      <div class="tab-row d-flex justify-content-between align-items-end position-relative flex-shrink-0">
        <button class="tab-now">Toolset Type</button>
        <button class="tab-side d-flex align-items-center align-self-start">Toolset<svg color="#74a843"><use href="#ob"/></svg></button>
      </div>
      <div class="content-box flex-grow-1">
        <div class="crumb-bar">Toolset</div>
        <div class="error-box d-flex align-items-center" role="alert">
          <svg width="26" height="26"><use href="#octo"/></svg>
          <div><strong class="d-block">Error:</strong>The value is out of a valid range</div>
        </div>
        <form class="edit-form">
          <label class="ref" for="client"><svg width="7" height="8"><use href="#ref"/></svg>Client</label>
          <select id="client"><option>BigBazaar</option></select>
          <label class="ref" for="org"><svg width="7" height="8"><use href="#ref"/></svg>Organization</label>
          <select id="org"><option>A</option></select>
          <label for="name">Name</label>
          <input class="wide req" type="text" id="name" value="name">
          <label for="desc">Description</label>
          <textarea class="wide" id="desc"></textarea>
          <label for="active">Active</label>
          <div class="wide"><input type="checkbox" id="active" checked></div>
          <label for="life">Lifespan</label>
          <div class="wide life-row d-flex align-items-center"><input class="focused" type="text" id="life" value="-550"><button type="button" aria-label="Calculadora"><svg width="26" height="20"><use href="#calc"/></svg></button></div>
        </form>
      </div>
    </section>
  </div>
</main>

<footer class="status-bar d-flex align-items-center flex-shrink-0">
  <span>Terminado</span>
  <div class="status-icons d-flex ms-auto"><svg class="i16"><use href="#bug"/></svg><svg class="i16"><use href="#orb"/></svg></div>
</footer>
<script src="https://cdn.jsdelivr.net/npm/bootstrap@5.3.0/dist/js/bootstrap.bundle.min.js"></script>
</body>
</html>
